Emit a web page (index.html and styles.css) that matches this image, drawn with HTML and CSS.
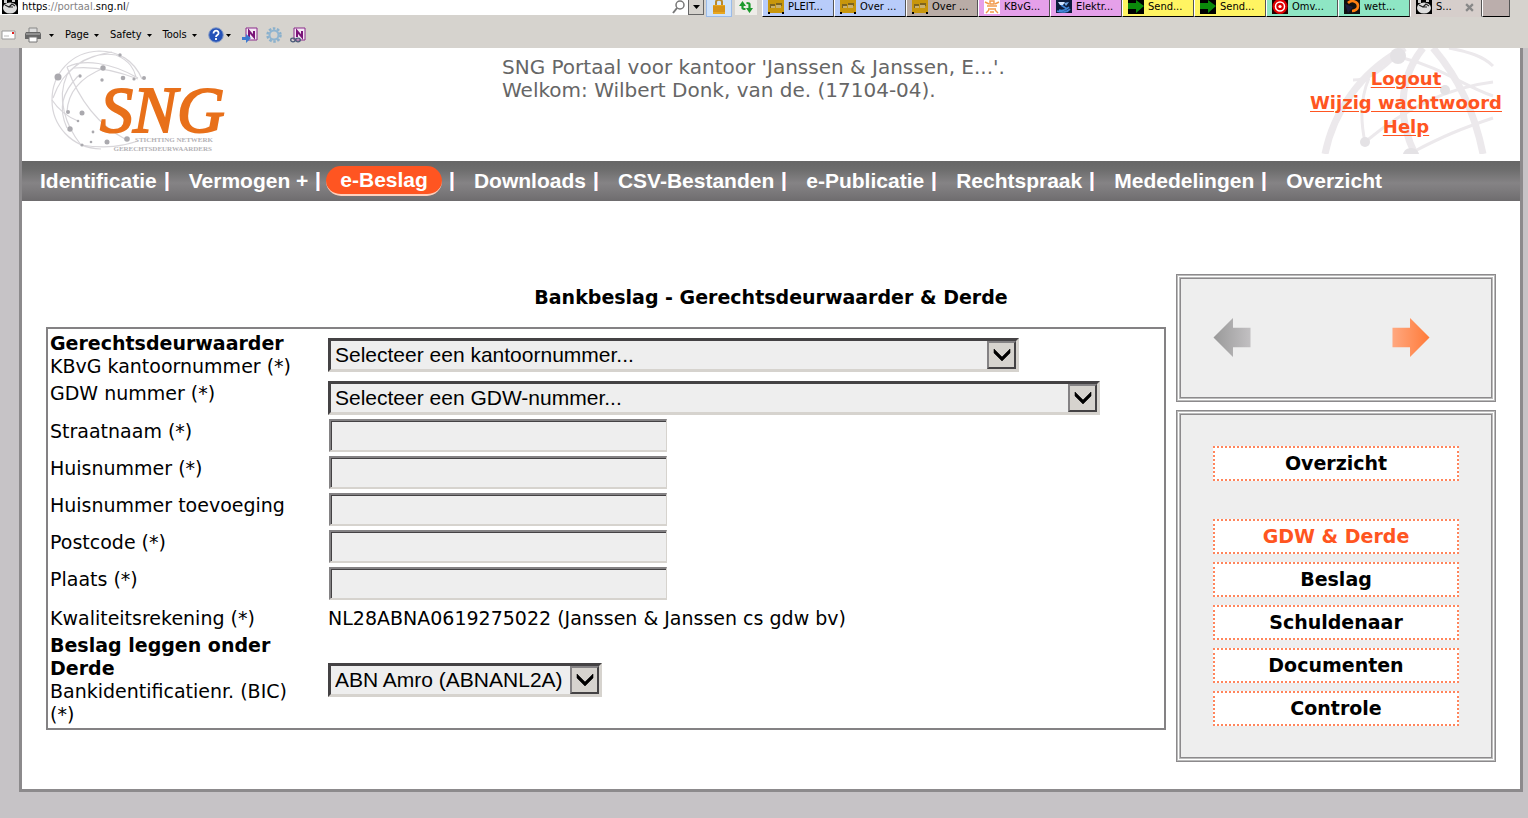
FILE: index.html
```html
<!DOCTYPE html>
<html lang="nl">
<head>
<meta charset="utf-8">
<title>SNG Portaal</title>
<link rel="stylesheet" href="styles.css">
</head>
<body>
<svg class="defs" aria-hidden="true">
  <symbol id="i-gold" viewBox="0 0 16 16"><rect width="16" height="13" fill="#c8960c"/><path d="M0 12h2v2H0zM14 12h2v2h-2z" fill="#000"/><path d="M2 4h5v4H2zM8 3h6v3H8z" fill="#7d6420"/><path d="M3 6h4v2H3zM8 5h5v3H8z" fill="#c8b070"/></symbol>
  <symbol id="i-crown" viewBox="0 0 16 16"><rect width="16" height="14" fill="#fff"/><path d="M1 2l4 2M15 2l-4 2M6 1h4v3H6zM3 6h10M4 9h8M2 13l3-3M14 13l-3-3M6 12h4" fill="none" stroke="#f29a4a" stroke-width="1.4"/></symbol>
  <symbol id="i-swirl" viewBox="0 0 16 16"><rect width="16" height="13" fill="#0c1c3c"/><path d="M1 11c5 2 11 1 13-2M3 10c3 1 7 0 10-3M5 5l6 4" fill="none" stroke="#3f86d8" stroke-width="1.600"/><path d="M2 2h7l-2 3H4z" fill="#cfe4ff"/><path d="M8 3l5-1-3 4z" fill="#6fa8e8"/></symbol>
  <symbol id="i-send" viewBox="0 0 16 16"><rect width="16" height="14" fill="#000"/><path d="M0 3h8V0l8 6-8 7V9H0z" fill="#0b8a0b"/></symbol>
  <symbol id="i-target" viewBox="0 0 16 16"><rect width="16" height="14" fill="#200"/><circle cx="8" cy="6.500" r="7.500" fill="#e00000"/><circle cx="8" cy="6.500" r="4.500" fill="none" stroke="#fff" stroke-width="1.500"/><circle cx="8" cy="6.500" r="1.600" fill="#fff"/></symbol>
  <symbol id="i-ring" viewBox="0 0 16 16"><rect width="16" height="14" fill="#111"/><path d="M4 3c4-4 10-1 10 3 0 3-3 5-6 5" fill="none" stroke="#ff7f11" stroke-width="2.600"/><path d="M1 4l8 3-5 6z" fill="#1c1c3c"/></symbol>
  <symbol id="i-globe" viewBox="0 0 16 16"><rect width="16" height="14" fill="#000"/><ellipse cx="8" cy="8" rx="7" ry="5.500" fill="#ddd"/><path d="M3 5l4 2 3-3 3 2M7 7h4" fill="none" stroke="#222" stroke-width="1.200"/><path d="M2 0h3v3H2zM10 0h3v2h-3z" fill="#ccc"/></symbol>
  <symbol id="i-note" viewBox="0 0 16 16"><path d="M4 1h11v12H4z" fill="#f4e6f4" stroke="#8a2a8a"/><path d="M7 10V4l5 6V4" fill="none" stroke="#7a1478" stroke-width="2"/></symbol>
  <symbol id="i-drop" viewBox="0 0 29 28"><path d="M0 0h29v28H0z" fill="#444244"/><path d="M0 0h29l-2 2H2v24l-2 2z" fill="#848284"/><path d="M2 2h25v24H2z" fill="#d6d3ce"/><path d="M7 8l8 8 8-8v4l-8 8-8-8z" fill="#000" stroke="#000" stroke-width=".6"/></symbol>
</svg>

<div class="browser">
  <div class="browser-top">
    <div class="address" role="textbox" aria-label="Adres">
      <svg class="icon"><use href="#i-globe"/></svg>
      <span class="url"><b>https</b>://portaal.<b>sng.nl</b>/</span>
      <svg class="glass" viewBox="0 0 14 14"><circle cx="8" cy="5" r="4" fill="none" stroke="#777" stroke-width="1.500"/><path d="M5 8l-4 5" stroke="#777" stroke-width="2"/></svg>
    </div>
    <button class="tool drop" aria-label="Adreslijst"><svg class="caret" viewBox="0 0 7 4"><path d="M0 0h7L3.500 4z"/></svg></button>
    <button class="tool lock" aria-label="Beveiliging"><svg class="icon" viewBox="0 0 16 16"><path d="M5 6V2c0-3 6-3 6 0v4" fill="none" stroke="#b98a2c" stroke-width="2"/><path d="M2 5h12v9H2z" fill="#e8a720"/><path d="M2 7h12M2 9h12M2 11h12" stroke="#c47f10"/></svg></button>
    <button class="tool reload" aria-label="Vernieuwen"><svg class="icon" viewBox="0 0 16 16"><path d="M4.500 5v3c0 1 1 1 3 1M11.500 8V4c0-1-1-1-3-1" fill="none" stroke="#1c9a2c" stroke-width="2.200"/><path d="M1 6l3.500-5L8 6zM8 8h7l-3.500 5z" fill="#1c9a2c"/></svg></button>
    <div class="tabs">
      <button class="tab blue"><svg class="icon"><use href="#i-gold"/></svg>PLEIT...</button>
      <button class="tab blue"><svg class="icon"><use href="#i-gold"/></svg>Over ...</button>
      <button class="tab taupe"><svg class="icon"><use href="#i-gold"/></svg>Over ...</button>
      <button class="tab pink"><svg class="icon"><use href="#i-crown"/></svg>KBvG...</button>
      <button class="tab pink"><svg class="icon"><use href="#i-swirl"/></svg>Elektr...</button>
      <button class="tab yellow"><svg class="icon"><use href="#i-send"/></svg>Send...</button>
      <button class="tab yellow"><svg class="icon"><use href="#i-send"/></svg>Send...</button>
      <button class="tab green"><svg class="icon"><use href="#i-target"/></svg>Omv...</button>
      <button class="tab green"><svg class="icon"><use href="#i-ring"/></svg>wett...</button>
      <button class="tab current"><svg class="icon"><use href="#i-globe"/></svg>S...<svg class="close" viewBox="0 0 8 8"><path d="M1 1l6 6M7 1L1 7" stroke="#888" stroke-width="2"/></svg></button>
      <button class="tab blank" aria-label="Nieuw tabblad"></button>
    </div>
  </div>
  <div class="commands">
    <button class="cmd mail" aria-label="Mail"><svg class="icon" viewBox="0 0 16 16"><path d="M1 4h13v8H1z" fill="#fff" stroke="#999"/><path d="M3 9h5" stroke="#bbb"/><path d="M11 5h2v2h-2z" fill="#e02020"/></svg></button>
    <button class="cmd print" aria-label="Print"><svg class="icon" viewBox="0 0 16 16"><path d="M4 1h8v5H4z" fill="#ddd" stroke="#888"/><path d="M1 5h14l1 2v5H0V7z" fill="#666"/><path d="M1 7h14" stroke="#bbb"/><path d="M4 10h8v5H4z" fill="#fff" stroke="#777"/></svg><svg class="caret" viewBox="0 0 7 4"><path d="M0 0h7L3.500 4z"/></svg></button>
    <button class="cmd page">Page<svg class="caret" viewBox="0 0 7 4"><path d="M0 0h7L3.500 4z"/></svg></button>
    <button class="cmd">Safety<svg class="caret" viewBox="0 0 7 4"><path d="M0 0h7L3.500 4z"/></svg></button>
    <button class="cmd">Tools<svg class="caret" viewBox="0 0 7 4"><path d="M0 0h7L3.500 4z"/></svg></button>
    <button class="cmd help" aria-label="Help"><svg class="icon" viewBox="0 0 16 16"><circle cx="8" cy="8" r="7.300" fill="#2552b8" stroke="#8aa0c8"/><path d="M5.500 6.500c0-4 5.500-3.500 5 0-.3 1.500-2.500 1.500-2.500 3.500M8 11v2" fill="none" stroke="#fff" stroke-width="1.800"/></svg><svg class="caret" viewBox="0 0 7 4"><path d="M0 0h7L3.500 4z"/></svg></button>
    <div class="extras">
      <button class="cmd" aria-label="Naar OneNote"><svg class="icon" viewBox="0 0 16 16"><use href="#i-note" width="16" height="16"/><path d="M0 10h4V7l5 4-5 5v-3H0z" fill="#3c7ad0"/></svg></button>
      <button class="cmd" aria-label="Instellingen"><svg class="icon" viewBox="0 0 16 16"><circle cx="8" cy="8" r="6.500" fill="none" stroke="#8ab0cc" stroke-width="2.500" stroke-dasharray="2.500 1.600"/><circle cx="8" cy="8" r="4.500" fill="none" stroke="#8fb4d0" stroke-width="2"/></svg></button>
      <button class="cmd" aria-label="Gekoppelde notities"><svg class="icon" viewBox="0 0 16 16"><use href="#i-note" width="16" height="16"/><g fill="none" stroke="#4a5a78" stroke-width="1.300"><ellipse cx="3" cy="13" rx="2.300" ry="1.800"/><ellipse cx="8" cy="13" rx="2.300" ry="1.800"/></g></svg></button>
    </div>
  </div>
</div>

<div class="portal">
  <header class="header">
    <svg class="logo" viewBox="0 0 180 106" role="img" aria-label="SNG">
      <g fill="none" stroke="#d8d6da" stroke-width="1.200">
        <path d="M92 31C84 12 68 3 49 3 21 4 2 26 2 52c0 25 19 48 49 49"/>
        <path d="M17 19C34 11 60 14 88 30M3 50C12 24 36 2 66 7M66 7c14 6 18 14 20 22M31 97C16 78 6 51 17 27c8-11 22-19 45-23"/>
        <path d="M17 19c8 22 24 54 58 72M2 52c8 12 16 17 26 21M28 28C12 45 8 60 17 80M54 20C34 28 18 42 17 64M31 97c26 4 42 1 57-4M24 20c22-2 46 4 64 11"/>
      </g>
      <g fill="#aaa9ae"><circle cx="8" cy="29" r="3.500"/><circle cx="53" cy="20" r="2.700"/><circle cx="70" cy="7" r="1.700"/><circle cx="30" cy="28" r="1.700"/><circle cx="52" cy="32" r="1.700"/><circle cx="73" cy="30" r="2.300"/><circle cx="84" cy="31" r="1.600"/><circle cx="94" cy="30" r="2"/><circle cx="18" cy="64" r="2"/><circle cx="32" cy="65" r="2.500"/><circle cx="28" cy="73" r="1.300"/><circle cx="20" cy="81" r="2.700"/><circle cx="43" cy="84" r="1.400"/><circle cx="57" cy="94" r="2.500"/><circle cx="77" cy="91" r="2.800"/><circle cx="32" cy="97" r="1.600"/><circle cx="41" cy="94" r="1.300"/></g>
      <text class="logo-name" x="50" y="84">SNG</text>
      <text class="logo-sub" x="163" y="94" text-anchor="end">STICHTING NETWERK</text>
      <text class="logo-sub" x="162" y="103" text-anchor="end">GERECHTSDEURWAARDERS</text>
    </svg>
    <div class="welcome">SNG Portaal voor kantoor 'Janssen &amp; Janssen, E...'.<br>Welkom: Wilbert Donk, van de. (17104-04).</div>
    <div class="account">
      <svg class="globe" viewBox="0 0 174 106" aria-hidden="true">
        <g fill="none" stroke="#ece9ec" stroke-width="7"><path d="M4 106C12 66 38 24 84 0"/><path d="M94 106C76 70 78 30 102 0"/><path d="M112 0c26 30 42 66 50 106"/></g>
        <g fill="none" stroke="#ece9ec" stroke-width="3"><path d="M44 94C38 66 42 44 48 30M92 104c30-16 50-24 80-34M44 94c36-30 78-54 128-60M82 10c40 10 60 28 90 38M32 32c16 0 30-10 45-26M128 0c20 4 34 8 44 18"/></g>
        <g fill="#e4e2e5"><circle cx="77" cy="8" r="8"/><circle cx="44" cy="94" r="5"/><circle cx="124" cy="42" r="5"/><path d="M82 106c2-8 14-8 16 0z"/></g>
      </svg>
      <a href="#logout">Logout</a>
      <a href="#wachtwoord">Wijzig wachtwoord</a>
      <a href="#help">Help</a>
    </div>
  </header>

  <nav class="menu">
    <a href="#identificatie">Identificatie</a>
    <a href="#vermogen">Vermogen +</a>
    <a href="#ebeslag" class="active" aria-current="page"><span>e-Beslag</span></a>
    <a href="#downloads">Downloads</a>
    <a href="#csv">CSV-Bestanden</a>
    <a href="#epublicatie">e-Publicatie</a>
    <a href="#rechtspraak">Rechtspraak</a>
    <a href="#mededelingen">Mededelingen</a>
    <a href="#overzicht">Overzicht</a>
  </nav>

  <main class="main">
    <h1 class="title">Bankbeslag - Gerechtsdeurwaarder &amp; Derde</h1>

    <form class="form">
      <div class="row office">
        <label for="kantoor"><strong>Gerechtsdeurwaarder</strong><br>KBvG kantoornummer (*)</label>
        <div class="select w-office"><select id="kantoor"><option>Selecteer een kantoornummer...</option></select><svg class="arrow"><use href="#i-drop"/></svg></div>
      </div>
      <div class="row gdw">
        <label for="gdw">GDW nummer (*)</label>
        <div class="select w-gdw"><select id="gdw"><option>Selecteer een GDW-nummer...</option></select><svg class="arrow"><use href="#i-drop"/></svg></div>
      </div>
      <div class="row"><label for="straat">Straatnaam (*)</label><input id="straat" type="text"></div>
      <div class="row"><label for="huisnr">Huisnummer (*)</label><input id="huisnr" type="text"></div>
      <div class="row"><label for="toev">Huisnummer toevoeging</label><input id="toev" type="text"></div>
      <div class="row"><label for="postcode">Postcode (*)</label><input id="postcode" type="text"></div>
      <div class="row"><label for="plaats">Plaats (*)</label><input id="plaats" type="text"></div>
      <div class="row plain"><span>Kwaliteitsrekening (*)</span><span>NL28ABNA0619275022 (Janssen &amp; Janssen cs gdw bv)</span></div>
      <div class="row bank">
        <label for="bic"><strong>Beslag leggen onder Derde</strong><br>Bankidentificatienr. (BIC) (*)</label>
        <div class="select w-bank"><select id="bic"><option>ABN Amro (ABNANL2A)</option></select><svg class="arrow"><use href="#i-drop"/></svg></div>
      </div>
    </form>

    <aside class="side">
      <div class="panel pager">
        <button aria-label="Vorige"><svg viewBox="0 0 38 40"><defs><linearGradient id="g1"><stop offset="0" stop-color="#999"/><stop offset="1" stop-color="#c2c0c2"/></linearGradient></defs><path d="M0 20L20 0v10h18v20H20v10z" fill="url(#g1)"/></svg></button>
        <button aria-label="Volgende"><svg viewBox="0 0 38 40"><defs><linearGradient id="g2"><stop offset="0" stop-color="#ffa880"/><stop offset="1" stop-color="#ff7a38"/></linearGradient></defs><path d="M38 20L18 0v10H0v20h18v10z" fill="url(#g2)"/></svg></button>
      </div>
      <div class="panel steps">
        <button class="step overview">Overzicht</button>
        <button class="step on">GDW &amp; Derde</button>
        <button class="step">Beslag</button>
        <button class="step">Schuldenaar</button>
        <button class="step">Documenten</button>
        <button class="step">Controle</button>
      </div>
    </aside>
  </main>
</div>
</body>
</html>
```

FILE: styles.css
```css
* { box-sizing: border-box; }

body {
  margin: 0;
  background: #c6c3c6;
  color: #000;
  font: 19px/23px "DejaVu Sans", sans-serif;
}

button { font: inherit; color: inherit; border: 0; padding: 0; background: none; }
svg { display: block; flex: none; }
.defs { position: absolute; width: 0; height: 0; }
.icon { width: 16px; height: 16px; }
.caret { width: 5px; height: 3px; }

/* Browser chrome */
.browser {
  height: 48px;
  background: #d6d3ce;
  font: 11px/14px "DejaVu Sans Condensed", "DejaVu Sans", sans-serif;
}
.browser-top { display: flex; height: 17px; }
.address {
  display: flex;
  flex: 1;
  height: 15px;
  background: #fff;
  padding-left: 2px;
  overflow: hidden;
}
.url { flex: 1; padding-left: 4px; color: #848284; }
.url b { font-weight: normal; color: #000; }
.glass { width: 14px; height: 14px; margin-right: 2px; }
.tool { display: flex; align-items: center; justify-content: center; height: 15px; }
.drop { width: 16px; background: #d6d3ce; border: 1px solid #666; border-top: 0; }
.drop .caret { width: 7px; height: 4px; }
.lock { width: 26px; height: 17px; margin-left: 2px; background: #cfe3fb; border: 1px solid #9bbbe8; border-top: 0; }
.reload { width: 22px; margin: 0 5px 0 3px; background: #eeece8; }
.tabs { display: flex; flex: none; width: 766px; }
.tab {
  display: flex;
  align-items: flex-start;
  gap: 4px;
  width: 72px;
  height: 17px;
  padding-left: 5px;
  border-left: 1px solid #fff;
  border-right: 1px solid #555;
  border-bottom: 1px solid #000;
  white-space: nowrap;
  overflow: hidden;
}
.blue { background: #b8ccfa; }
.taupe { background: #b9aca6; }
.pink { background: #e5a0ea; }
.yellow { background: #fff462; }
.green { background: #8ee6c4; }
.current { background: #d6cecb; border-bottom-color: #d6cecb; }
.close { width: 9px; height: 9px; margin: 3px 0 0 9px; }
.blank { width: 28px; background: #bbaeac; }
.commands { display: flex; align-items: center; gap: 11px; height: 31px; padding: 5px 0 0 1px; }
.cmd { display: flex; align-items: center; gap: 5px; }
.mail { width: 13px; }
.print { gap: 8px; }
.help { gap: 2px; }
.extras { display: flex; gap: 8px; }

/* Portal frame */
.portal {
  margin: 0 5px 26px 19px;
  border: 3px solid #8c8a8c;
  border-top: 0;
  background: #fff;
}
.header {
  display: grid;
  grid-template-columns: 480px 1fr 228px;
  height: 113px;
}
.logo { width: 180px; height: 106px; margin-left: 28px; }
.logo-name { font: italic 66px "Liberation Serif", serif; fill: #e8701a; stroke: #e8701a; stroke-width: 2px; }
.logo-sub { font: bold 7px "Liberation Serif", serif; fill: #b4b2b6; }
.welcome { padding-top: 8px; color: #666; font-size: 20px; }
.account {
  position: relative;
  display: flex;
  flex-direction: column;
  align-items: center;
  padding-top: 19px;
  line-height: 24px;
}
.account a { position: relative; color: #ff5521; font-size: 18px; font-weight: bold; text-underline-offset: 2px; }
.globe { position: absolute; top: 0; right: 25px; width: 174px; height: 106px; }

.menu {
  display: flex;
  align-items: center;
  height: 40px;
  padding: 0 0 0 18px;
  background: linear-gradient(#666, #6c6c6c 20%, #858385 55%, #7c7a7c 75%, #6e6c6e);
  font: bold 21px/24px "Liberation Sans", Arial, sans-serif;
  white-space: nowrap;
}
.menu a { display: flex; align-items: center; color: #fff; text-decoration: none; }
.menu a + a { padding-left: 20px; }
.menu a:not(:last-child)::after {
  content: "";
  width: 4px;
  height: 19px;
  margin-left: 8px;
  background: linear-gradient(90deg, #a5c8ee 1px, #fff 1px, #fff 3px, #e8a8a0 3px);
}
.menu a.active { padding-left: 6px; }
.active span {
  padding: 2px 14px;
  border-bottom: 2px solid #ffd0bd;
  border-radius: 15px;
  background: #ff5521;
}

/* Content */
.main {
  display: grid;
  grid-template-columns: 1fr 320px;
  grid-template-rows: 53px auto;
  column-gap: 10px;
  padding: 73px 24px 27px;
}
.title {
  grid-area: 1 / 1 / 2 / 3;
  margin: 0;
  padding-top: 12px;
  font-size: 19px;
  line-height: 23px;
  text-align: center;
}
.form {
  grid-area: 2 / 1;
  align-self: start;
  display: grid;
  gap: 3px;
  padding: 2px;
  border: 2px solid #848284;
}
.row { display: grid; grid-template-columns: 278px 1fr; min-height: 34px; }
.row > :first-child { padding: 1px 20px 0 0; }
.office { align-items: center; }
.gdw { min-height: 35px; }
.bank { align-items: center; }
.plain { min-height: 25px; padding-top: 2px; }
.plain > :last-child { padding-top: 1px; }
.row input {
  width: 338px;
  max-width: 100%;
  height: 33px;
  margin-left: 1px;
  padding: 0 4px;
  border: 2px solid;
  border-color: #848284 #d6d3ce #d6d3ce #848284;
  border-right-width: 1px;
  box-shadow: inset 1px 1px #444244;
  background: #eee;
  font: 21px "Liberation Sans", Arial, sans-serif;
}
.select { position: relative; max-width: 100%; height: 34px; }
.select select {
  appearance: none;
  width: 100%;
  height: 34px;
  padding: 0 32px 0 4px;
  border: 3px solid;
  border-color: #444244 #d6d3ce #d6d3ce #444244;
  border-radius: 0;
  background: #eee;
  color: #000;
  font: 21px/24px "Liberation Sans", Arial, sans-serif;
}
.arrow { position: absolute; top: 3px; right: 3px; width: 29px; height: 28px; pointer-events: none; }
.w-office { width: 691px; }
.w-gdw { width: 772px; }
.w-bank { width: 274px; }

.side { grid-area: 1 / 2 / 3 / 3; display: flex; flex-direction: column; gap: 8px; }
.panel {
  border: 1px solid #8c8a8c;
  background: #eee;
  box-shadow: inset 0 0 0 1px #bbb, inset 0 0 0 2px #fff, inset 0 0 0 3px #bbb, inset 0 0 0 4px #8c8a8c;
}
.pager { display: flex; justify-content: space-between; padding: 43px 65px 44px 36px; }
.pager svg { width: 38px; height: 39px; }
.steps { display: flex; flex-direction: column; gap: 8px; padding: 35px 36px; }
.step {
  height: 35px;
  border: 2px dotted #ff855c;
  background: #fff;
  font-weight: bold;
}
.overview { margin-bottom: 30px; }
.on { color: #ff5521; }
```
